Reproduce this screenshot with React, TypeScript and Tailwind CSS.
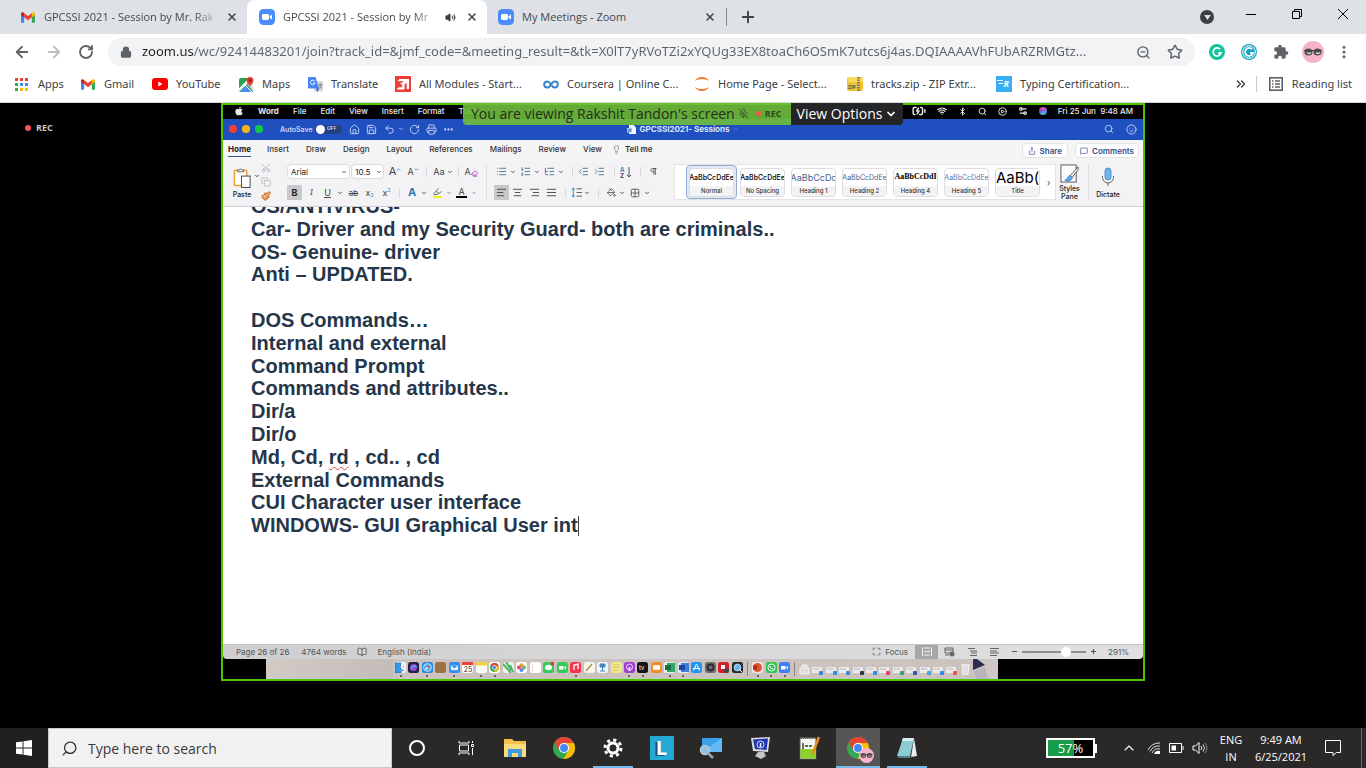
import React from 'react';
import {
  ArrowLeft, ArrowRight, RotateCw, Lock, ZoomOut, Star, MoreVertical, X, Plus, Minus, Volume2,
  ChevronDown, ChevronUp, ChevronsRight, Wifi, Bluetooth, Search, CirclePlay, Smile, House, Save, Undo2,
  Printer, Ellipsis, Lightbulb, MessageSquare, Share, Scissors, Copy, Paintbrush, MicOff, Maximize, BookOpen,
  BatteryCharging, ListTree, AlignLeft, AlignCenter, AlignRight, AlignJustify, List, ListOrdered,
  IndentDecrease, IndentIncrease, Pilcrow, PaintBucket, Grid2x2, Highlighter, Eraser, Settings2,
} from 'lucide-react';
import { FaApple } from 'react-icons/fa';
import { MdExtension } from 'react-icons/md';

type Kids = { children?: React.ReactNode };

/* ---------- brand glyphs ---------- */

const GmailIcon = () => (
  <svg viewBox="0 0 16 12" className="h-[11px] w-[14px] shrink-0">
    <path d="M0 1.5V11a1 1 0 0 0 1 1h2.600V5.200z" fill="#4285f4" />
    <path d="M16 1.5V11a1 1 0 0 1-1 1h-2.600V5.200z" fill="#34a853" />
    <path d="M12.400 1v4.800L16 3V1.600C16 .1 14.300-.5 13.200.3z" fill="#fbbc04" />
    <path d="M3.600 5.800V1L8 4.300 12.400 1v4.800L8 9.100z" fill="#ea4335" />
    <path d="M0 1.600V3l3.600 2.800V1L2.800.3C1.700-.5 0 .1 0 1.600z" fill="#c5221f" />
  </svg>
);

const ZoomIcon = () => (
  <svg viewBox="0 0 16 16" className="size-4 shrink-0">
    <rect width="16" height="16" rx="4.500" fill="#4a8cff" />
    <rect x="3" y="5" width="7" height="6" rx="1.400" fill="#fff" />
    <path d="M10.600 7.200 13 5.400v5.200l-2.400-1.800z" fill="#fff" />
  </svg>
);

const ChromeIcon = ({ className }: { className: string }) => (
  <svg viewBox="0 0 24 24" className={className}>
    <circle cx="12" cy="12" r="12" fill="#34a853" />
    <path d="M12 12 1.600 6A12 12 0 0 1 22.400 6z" fill="#ea4335" />
    <path d="M12 6.500h10.700A12 12 0 0 1 11.500 24l5.300-9.200z" fill="#fbbc04" />
    <path d="M1.600 6 7 15l5-3V6z" fill="#34a853" />
    <path d="M1.600 6h5l5.400.5-5 4-1 3z" fill="#ea4335" />
    <circle cx="12" cy="12" r="5.500" fill="#fff" />
    <circle cx="12" cy="12" r="4.300" fill="#4285f4" />
  </svg>
);

const AppsIcon = () => (
  <svg viewBox="0 0 13 13" className="size-[13px] shrink-0">
    {['#ea4335', '#ea4335', '#ea4335', '#34a853', '#4285f4', '#4285f4', '#34a853', '#fbbc04', '#fbbc04'].map((c, i) => (
      <rect key={i} x={(i % 3) * 5} y={Math.floor(i / 3) * 5} width="3" height="3" fill={c} />
    ))}
  </svg>
);

const YouTubeIcon = () => (
  <svg viewBox="0 0 16 12" className="h-3 w-4 shrink-0">
    <rect width="16" height="12" rx="3" fill="#f00" />
    <path d="M6.300 3.600v4.800L10.400 6z" fill="#fff" />
  </svg>
);

const MapsIcon = () => (
  <svg viewBox="0 0 15 15" className="size-[15px] shrink-0">
    <rect y="1" width="14" height="14" rx="2" fill="#2da04b" />
    <path d="M7 8 14 15H1z" fill="#4b8df8" />
    <path d="M0 13 10 3" stroke="#fff" strokeWidth="2.500" />
    <path d="M6 8l7 7" stroke="#fff" strokeWidth="1" />
    <path d="M8 7l6 7V5z" fill="#d8dade" />
    <path d="M11 10C10.500 7.500 7.500 6 7.500 3.500a3.500 3.500 0 0 1 7 0C14.500 6 11.500 7.500 11 10z" fill="#e33b2e" />
    <circle cx="11" cy="3.500" r="1.200" fill="#8b1a13" />
  </svg>
);

const TranslateIcon = () => (
  <svg viewBox="0 0 15 15" className="size-[15px] shrink-0">
    <rect x="6" y="4" width="9" height="10.500" rx="1" fill="#d5d7da" />
    <path d="M0 1a1 1 0 0 1 1-1h6.500L11 11.500H1a1 1 0 0 1-1-1z" fill="#4285f4" />
    <path d="M8 11.500h3L9.500 15z" fill="#2a56c6" />
    <path d="M6.800 4.300A2.300 2.300 0 1 0 7 6H5" stroke="#fff" strokeWidth="1" fill="none" />
    <path d="M10.500 7.500h4M12.500 6.500v1M13.700 7.500c-.5 2-1.500 3-2.700 4M11.300 8.500c.6 1.500 1.500 2.300 2.700 3" stroke="#6f767d" strokeWidth=".8" fill="none" />
  </svg>
);

const ModulesIcon = () => (
  <svg viewBox="0 0 16 16" className="size-4 shrink-0">
    <rect width="16" height="16" fill="#ee3e36" />
    <path d="M4.500 3H14v10h-2.300V6.800L9.500 8.600v4.900H1.500l2.300-2.300h3.400V8.300H4.500L9 5.300H2.500z" fill="#fff" />
  </svg>
);

const CourseraIcon = () => (
  <svg viewBox="0 0 16 9" className="h-[9px] w-4 shrink-0">
    <path d="M8 4.500C6.500 2 5.500 1.400 4.300 1.400a3.100 3.100 0 0 0 0 6.200C6 7.600 7 6.500 8 4.500s2-3.100 3.700-3.100a3.100 3.100 0 0 1 0 6.200C10.500 7.600 9.500 7 8 4.500z" stroke="#3a86c8" strokeWidth="2" fill="none" />
  </svg>
);

const JupyterIcon = () => (
  <svg viewBox="0 0 16 16" className="size-4 shrink-0">
    <path d="M1 5C3.500-.2 12.500-.2 15 5 11.500 2.300 4.500 2.300 1 5zM1 11C3.500 16.200 12.500 16.200 15 11 11.500 13.700 4.500 13.700 1 11z" fill="#f37726" />
  </svg>
);

const ZipIcon = () => (
  <svg viewBox="0 0 16 14" className="h-[14px] w-4 shrink-0">
    <rect width="16" height="14" rx="2" fill="#efc32f" />
    <rect width="16" height="5" rx="2" fill="#f7d95c" />
    <path d="M11.500 0v14" stroke="#6d7077" strokeWidth="2.500" strokeDasharray="1.500 1" />
    <text x="1" y="12" fontSize="5" fontWeight="700" fill="#3a5a7a" fontFamily="Open Sans">ZIP</text>
  </svg>
);

const TypingIcon = () => (
  <svg viewBox="0 0 16 16" className="size-4 shrink-0">
    <rect width="16" height="16" rx="1" fill="#35aef5" />
    <path d="M1 4.500h6M2.500 7.500H7" stroke="#fff" strokeWidth="1" />
    <text x="7.500" y="11" fontSize="9" fontWeight="700" fontStyle="italic" fill="#fff" fontFamily="Open Sans">R</text>
  </svg>
);

const GlassesFace = ({ className }: { className: string }) => (
  <svg viewBox="0 0 22 22" className={className}>
    <circle cx="11" cy="11" r="11" fill="#f7b3cc" />
    <path d="M2 9.500h18" stroke="#3d3d40" strokeWidth="1" />
    <ellipse cx="6.500" cy="11" rx="4" ry="3.500" fill="#4b4b4f" />
    <ellipse cx="15.500" cy="11" rx="4" ry="3.500" fill="#4b4b4f" />
    <path d="M5 11.500q2 2 4 0M14 11.500q2 2 4 0" stroke="#d9c9cf" strokeWidth="1.300" fill="none" />
  </svg>
);

const Grammarly = ({ outlined }: { outlined?: boolean }) => (
  <svg viewBox="0 0 16 16" className="size-4 shrink-0">
    <circle cx="8" cy="8" r="8" fill={outlined ? '#12a5c4' : '#15c39a'} />
    {outlined && <circle cx="8" cy="8" r="6.300" stroke="#fff" strokeWidth="1" fill="none" />}
    <path d="M11 5.200A4 4 0 1 0 12 8.800H9" stroke="#fff" strokeWidth="1.700" fill="none" />
  </svg>
);

/* ---------- browser chrome ---------- */

const TabTitle = ({ children, className }: Kids & { className: string }) => (
  <span className={`overflow-hidden whitespace-nowrap text-left text-[11px] leading-4 text-[#45494d] ${className}`}>{children}</span>
);

function TabStrip() {
  return (
    <div className="flex h-[34px] shrink-0 items-stretch bg-[#dee1e6]">
      <div className="flex w-[247px] items-center pl-[21px]">
        <GmailIcon />
        <TabTitle className="ml-[9px] w-[176px] [mask-image:linear-gradient(to_right,black_85%,transparent)]">GPCSSI 2021 - Session by Mr. Rak</TabTitle>
        <button aria-label="Close tab" className="ml-[6px]"><X className="size-3 text-[#3c4043]" strokeWidth={3} /></button>
      </div>
      <div className="flex w-[240px] items-center rounded-t-lg bg-white pl-3">
        <ZoomIcon />
        <TabTitle className="ml-2 w-[154px] [mask-image:linear-gradient(to_right,black_85%,transparent)]">GPCSSI 2021 - Session by Mr</TabTitle>
        <Volume2 className="ml-2 size-[11px] text-[#3c4043]" fill="#3c4043" />
        <button aria-label="Close tab" className="ml-[10px]"><X className="size-3 text-[#3c4043]" strokeWidth={3} /></button>
      </div>
      <div className="flex w-[239px] items-center pl-[11px]">
        <ZoomIcon />
        <TabTitle className="ml-2 w-[180px]">My Meetings - Zoom</TabTitle>
        <button aria-label="Close tab" className="ml-[2px]"><X className="size-3 text-[#3c4043]" strokeWidth={3} /></button>
      </div>
      <div className="my-2 w-px bg-[#8a8d91]" />
      <button aria-label="New tab" className="ml-3"><Plus className="size-[18px] text-[#3c4043]" strokeWidth={2.5} /></button>
      <div className="ml-auto flex items-center pr-[18px]">
        <span className="mr-8 flex size-[14px] items-center justify-center rounded-full bg-[#3c4043]">
          <svg viewBox="0 0 8 6" className="h-[5px] w-[7px]"><path d="M0 0h8L4 6z" fill="#dee1e6" /></svg>
        </span>
        <button aria-label="Minimize" className="mb-[6px]"><svg viewBox="0 0 10 10" className="size-[10px]"><path d="M0 5.500h10" stroke="#000" /></svg></button>
        <button aria-label="Restore" className="mb-[6px] ml-9"><svg viewBox="0 0 10 10" className="size-[10px]"><path d="M.5 2.500h7v7h-7zM2.500 2.500v-2h7v7h-2" stroke="#000" fill="none" /></svg></button>
        <button aria-label="Close" className="mb-[6px] ml-9"><svg viewBox="0 0 10 10" className="size-[10px]"><path d="M0 0l10 10M10 0 0 10" stroke="#000" /></svg></button>
      </div>
    </div>
  );
}

function AddressBar() {
  return (
    <div className="flex h-9 shrink-0 items-center bg-white pl-[13px] pr-[14px] text-[#5f6368]">
      <button aria-label="Back"><ArrowLeft className="size-[18px]" strokeWidth={2.4} /></button>
      <button aria-label="Forward" className="ml-[14px]"><ArrowRight className="size-[18px] text-[#babcbe]" strokeWidth={2.4} /></button>
      <button aria-label="Reload" className="ml-[15px]"><RotateCw className="size-4" strokeWidth={2.8} /></button>
      <div className="ml-[14px] flex h-7 flex-1 items-center rounded-full bg-[#f1f3f4] pl-3 pr-3">
        <Lock className="size-3 text-[#5f6368]" fill="#5f6368" strokeWidth={2.5} />
        <input
          aria-label="Address"
          readOnly
          className="ml-[10px] min-w-0 flex-1 bg-[linear-gradient(to_right,#202124_52px,#5f6368_52px)] bg-clip-text font-['Noto_Sans','Open_Sans',sans-serif] text-[13px] text-transparent outline-none"
          value="zoom.us/wc/92414483201/join?track_id=&jmf_code=&meeting_result=&tk=X0lT7yRVoTZi2xYQUg33EX8toaCh6OSmK7utcs6j4as.DQIAAAAVhFUbARZRMGtz..."
        />
        <button aria-label="Zoom" className="ml-2"><ZoomOut className="size-[15px]" strokeWidth={2.2} /></button>
        <button aria-label="Bookmark" className="ml-4"><Star className="size-4" strokeWidth={2.2} /></button>
      </div>
      <div className="ml-[14px] flex items-center gap-4">
        <Grammarly />
        <Grammarly outlined />
        <MdExtension className="size-4" />
      </div>
      <GlassesFace className="ml-[13px] size-[22px]" />
      <button aria-label="Menu" className="ml-3"><MoreVertical className="size-4" strokeWidth={2.5} /></button>
    </div>
  );
}

const bookmarks: { icon: React.ReactNode; label: string; cell: string; gap: string }[] = [
  { icon: <AppsIcon />, label: 'Apps', cell: 'w-[66px]', gap: 'gap-[10px]' },
  { icon: <GmailIcon />, label: 'Gmail', cell: 'w-[71px]', gap: 'gap-[9px]' },
  { icon: <YouTubeIcon />, label: 'YouTube', cell: 'w-[87px]', gap: 'gap-2' },
  { icon: <MapsIcon />, label: 'Maps', cell: 'w-[69px]', gap: 'gap-2' },
  { icon: <TranslateIcon />, label: 'Translate', cell: 'w-[87px]', gap: 'gap-2' },
  { icon: <ModulesIcon />, label: 'All Modules - Start...', cell: 'w-[148px]', gap: 'gap-2' },
  { icon: <CourseraIcon />, label: 'Coursera | Online C...', cell: 'w-[151px]', gap: 'gap-2' },
  { icon: <JupyterIcon />, label: 'Home Page - Select...', cell: 'w-[153px]', gap: 'gap-2' },
  { icon: <ZipIcon />, label: 'tracks.zip - ZIP Extr...', cell: 'w-[149px]', gap: 'gap-2' },
  { icon: <TypingIcon />, label: 'Typing Certification...', cell: 'w-[150px]', gap: 'gap-2' },
];

function BookmarkBar() {
  return (
    <div className="flex h-[33px] shrink-0 items-center border-b border-[#d5d7da] bg-white pb-1 pl-[15px] pr-[14px] font-['Noto_Sans','Open_Sans',sans-serif] text-[11px] text-[#3c4043]">
      {bookmarks.map((b) => (
        <a key={b.label} href="#" className={`flex shrink-0 items-center whitespace-nowrap ${b.cell} ${b.gap}`}>{b.icon}{b.label}</a>
      ))}
      <ChevronsRight className="ml-auto size-[14px]" strokeWidth={2.5} />
      <div className="ml-2 h-4 w-px bg-[#c8cacd]" />
      <button className="ml-3 flex items-center gap-[9px] whitespace-nowrap">
        <svg viewBox="0 0 14 14" className="size-[14px]">
          <rect x=".8" y=".8" width="12.400" height="12.400" stroke="#5f6368" strokeWidth="1.600" fill="none" />
          <path d="M3 4h1.500M3 7h1.500M3 10h1.500M6 4h5M6 7h5M6 10h5" stroke="#5f6368" strokeWidth="1.300" />
        </svg>
        Reading list
      </button>
    </div>
  );
}

/* ---------- shared Mac screen ---------- */

function MacMenuBar() {
  return (
    <div className="flex h-[14px] items-center bg-black pb-[2px] pl-[11px] pr-[10px] text-[8px] font-medium leading-none text-[#e8e8e8]">
      <FaApple className="size-[10px]" />
      <span className="ml-[14px] font-bold">Word</span>
      <div className="ml-[14px] flex gap-[14px]">
        {['File', 'Edit', 'View', 'Insert', 'Format', 'Tools'].map((m) => <span key={m}>{m}</span>)}
      </div>
      <div className="ml-auto flex items-center gap-[11px]">
        <BatteryCharging className="size-[14px]" strokeWidth={2.5} />
        <Wifi className="size-[10px]" strokeWidth={3} />
        <Bluetooth className="size-[9px]" strokeWidth={2.5} />
        <Search className="size-[9px]" strokeWidth={2.5} />
        <CirclePlay className="size-[9px]" strokeWidth={2.5} />
        <Settings2 className="size-[10px]" strokeWidth={3} />
        <span className="size-2 rounded-full bg-[conic-gradient(#e6519c,#5b7cf0,#38c7d8,#8e44c9,#e6519c)]" />
        <span>Fri 25 Jun&nbsp; 9:48 AM</span>
      </div>
    </div>
  );
}

function WordTitleBar() {
  return (
    <div className="grid h-[21px] grid-cols-[1fr_auto_1fr] items-center bg-[#204fc0] px-[6px] pb-px text-[#c9d6f5]">
      <div className="flex items-center">
        <div className="flex gap-[5px]">
          <span className="size-2 rounded-full bg-[#f0403b]" />
          <span className="size-2 rounded-full bg-[#fcb716]" />
          <span className="size-2 rounded-full bg-[#12cb45]" />
        </div>
        <span className="ml-[17px] text-[7px] font-semibold leading-none">AutoSave</span>
        <button aria-label="AutoSave off" className="ml-[3px] flex h-[9px] w-[26px] items-center rounded-full bg-[#24407f] text-[5px] font-semibold">
          <span className="mr-[2px] size-[9px] rounded-full bg-white" />OFF
        </button>
        <House className="ml-[7px] size-[11px]" />
        <Save className="ml-[6px] size-[11px]" />
        <Undo2 className="ml-[7px] size-[11px]" />
        <ChevronDown className="ml-[3px] size-[6px]" strokeWidth={3} />
        <RotateCw className="ml-[5px] size-[11px]" />
        <Printer className="ml-[6px] size-[11px]" />
        <Ellipsis className="ml-[6px] size-[11px]" strokeWidth={3} />
      </div>
      <div className="flex items-center gap-1 text-[8px] font-bold leading-none text-[#dbe5fb]">
        <svg viewBox="0 0 9 9" className="size-[9px]"><path d="M2 0h4.500L9 2.500V9H2z" fill="#f1f5ff" /><rect y="3" width="5" height="4.500" fill="#a9c2f3" /><path d="M1 4l.8 2.500L2.500 4.500 3.200 6.500 4 4" stroke="#204fc0" strokeWidth=".5" fill="none" /></svg>
        GPCSSI2021- Sessions
        <ChevronDown className="size-[6px] text-[#6f90dd]" strokeWidth={2} />
      </div>
      <div className="flex items-center justify-end gap-3">
        <Search className="size-[10px]" />
        <Smile className="size-[11px]" />
      </div>
    </div>
  );
}

function RibbonTabs() {
  return (
    <div className="flex h-[21px] items-center bg-[#f6f5f6] pl-[5px] pr-1 text-[8px] font-medium leading-none text-[#333]">
      <div className="flex items-center gap-[17px] pb-[3px]">
        <button className="-mr-px border-b border-[#2b579a] pb-[3px] pt-1 font-bold text-[#222]">Home</button>
        {['Insert', 'Draw', 'Design', 'Layout', 'References', 'Mailings', 'Review', 'View'].map((t) => <button key={t}>{t}</button>)}
      </div>
      <div className="ml-[10px] flex items-center gap-1 pb-[3px]">
        <Lightbulb className="size-[9px] text-[#777]" />
        <button className="font-semibold">Tell me</button>
      </div>
      <button className="ml-auto flex h-[15px] items-center gap-1 rounded-sm border border-[#e3e2e4] bg-white px-[5px] font-semibold text-[#33508c]"><Share className="size-2" />Share</button>
      <button className="ml-[7px] flex h-[15px] items-center gap-1 rounded-sm border border-[#e3e2e4] bg-white px-1 font-semibold text-[#33508c]"><MessageSquare className="size-2" />Comments</button>
    </div>
  );
}

const Cell = ({ w, children }: Kids & { w: string }) => <span className={`flex shrink-0 items-center justify-center ${w}`}>{children}</span>;
const Chev = ({ w = 'w-3' }: { w?: string }) => <Cell w={w}><ChevronDown className="size-[6px] text-[#444]" strokeWidth={3.5} /></Cell>;
const Sep = ({ w = 'w-2' }: { w?: string }) => <Cell w={w}><span className="h-[10px] w-px bg-[#d8d7d9]" /></Cell>;

const styleCards: { sample: string; name: string; look: string }[] = [
  { sample: 'AaBbCcDdEe', name: 'Normal', look: 'text-[7px] text-black font-medium' },
  { sample: 'AaBbCcDdEe', name: 'No Spacing', look: 'text-[7px] text-black font-medium' },
  { sample: 'AaBbCcDc', name: 'Heading 1', look: 'text-[9px] text-[#4a6190]' },
  { sample: 'AaBbCcDdEe', name: 'Heading 2', look: 'text-[7px] text-[#4a6190]' },
  { sample: 'AaBbCcDdI', name: 'Heading 4', look: "text-[8px] font-bold text-black font-['Liberation_Serif',serif]" },
  { sample: 'AaBbCcDdEe', name: 'Heading 5', look: 'text-[7px] text-[#5a74a8]' },
  { sample: 'AaBb(', name: 'Title', look: 'text-[15px] text-black' },
];

function Ribbon() {
  return (
    <div className="flex h-[46px] items-center border-b border-[#cfced0] bg-[#f3f2f4] pb-[3px] text-[9px] leading-none text-[#444]">
      <div className="flex w-[54px] shrink-0 items-center pl-[7px]">
        <button className="flex w-6 flex-col items-center gap-[3px] text-[7px] font-medium text-[#222]">
          <svg viewBox="0 0 20 22" className="h-[21px] w-[19px]">
            <rect x="1.500" y="3.500" width="13" height="16" rx="1" stroke="#e9a23c" strokeWidth="1.600" fill="#fff" />
            <path d="M5 5V3h1.500a1.700 1.700 0 0 1 3 0H11v2z" stroke="#666" fill="#eee" />
            <rect x="9" y="9.500" width="9" height="12" stroke="#444" fill="#fff" />
          </svg>
          Paste
        </button>
        <ChevronDown className="mb-3 size-[6px] shrink-0" strokeWidth={3.5} />
        <div className="ml-px flex flex-col gap-1">
          <Scissors className="size-[10px] -rotate-90 text-[#aab3bd]" />
          <Copy className="size-[10px] text-[#b3b3b5]" />
          <Paintbrush className="size-[10px] text-[#d9782b]" strokeWidth={3} />
        </div>
      </div>

      <div className="ml-[10px] flex w-[194px] shrink-0 flex-col gap-[6px]">
        <div className="flex h-[15px] items-center">
          <label className="relative flex h-[15px] w-16 items-center rounded-sm border border-[#dcdbdd] bg-white">
            <select aria-label="Font" className="w-full appearance-none pl-[3px] text-[8px] text-[#222] outline-none"><option>Arial</option></select>
            <ChevronDown className="absolute right-[2px] size-[6px]" strokeWidth={3.5} />
          </label>
          <label className="relative ml-px flex h-[15px] w-[33px] items-center rounded-sm border border-[#dcdbdd] bg-white">
            <select aria-label="Font size" className="w-full appearance-none pl-[3px] text-[8px] text-[#222] outline-none"><option>10.5</option></select>
            <ChevronDown className="absolute right-[1px] size-[6px]" strokeWidth={3.5} />
          </label>
          <Cell w="w-[22px]"><span className="text-[11px]">A</span><ChevronUp className="mb-1 size-[5px] text-[#2b8ac6]" strokeWidth={4} /></Cell>
          <Cell w="w-[14px]"><span>A</span><ChevronDown className="mb-1 size-[5px] text-[#2b8ac6]" strokeWidth={4} /></Cell>
          <Sep w="w-[13px]" />
          <Cell w="w-[12px]">Aa</Cell>
          <Chev w="w-[10px]" />
          <Sep w="w-[6px]" />
          <Cell w="w-5">A<Eraser className="mt-1 size-[7px] text-[#b146c2]" strokeWidth={3} /></Cell>
        </div>
        <div className="flex h-[15px] items-center">
          <button className="h-[15px] w-[15px] shrink-0 bg-[#c9c8ca] font-bold text-[#222]">B</button>
          <Cell w="w-[19px]"><i className="font-serif">I</i></Cell>
          <Cell w="w-[13px]"><u>U</u></Cell>
          <Chev />
          <Cell w="w-[15px]"><s className="text-[8px]">ab</s></Cell>
          <Cell w="w-[17px]">x<span className="mt-[5px] text-[5px] text-[#2b8ac6]">2</span></Cell>
          <Cell w="w-[17px]">x<span className="mb-[5px] text-[5px] text-[#2b8ac6]">2</span></Cell>
          <Sep />
          <Cell w="w-[18px]"><b className="text-[11px] text-[#2a7ab0]">A</b></Cell>
          <Chev w="w-[6px]" />
          <Cell w="w-5"><span className="border-b-2 border-[#f5ee1c]"><Highlighter className="size-[9px]" /></span></Cell>
          <Chev w="w-1" />
          <Cell w="w-[21px]"><span className="border-b-2 border-black px-[2px]">A</span></Cell>
          <Chev w="w-1" />
        </div>
      </div>

      <div className="ml-[5px] flex w-[172px] shrink-0 flex-col gap-[6px] border-l border-[#e1e0e2] pl-2">
        <div className="flex h-[15px] items-center">
          <Cell w="w-3"><List className="size-[11px] text-[#4b7896]" /></Cell><Chev />
          <Cell w="w-3"><ListOrdered className="size-[11px] text-[#4b7896]" /></Cell><Chev />
          <Cell w="w-3"><ListTree className="size-[11px] text-[#4b7896]" /></Cell><Chev />
          <Sep w="w-[10px]" />
          <Cell w="w-3"><IndentDecrease className="size-[11px] text-[#4b7896]" /></Cell>
          <Cell w="w-5"><IndentIncrease className="size-[11px] text-[#4b7896]" /></Cell>
          <Sep w="w-[10px]" />
          <Cell w="w-[14px]">
            <svg viewBox="0 0 12 12" className="size-3"><text x="0" y="5.500" fontSize="6" fontWeight="700" fill="#2b8ac6" fontFamily="Inter">A</text><text x="0" y="11.500" fontSize="6" fontWeight="700" fill="#444" fontFamily="Inter">Z</text><path d="M9 1v10M7 9l2 2 2-2" stroke="#555" fill="none" /></svg>
          </Cell>
          <Sep w="w-[14px]" />
          <Cell w="w-3"><Pilcrow className="size-[9px]" /></Cell>
        </div>
        <div className="flex h-[15px] items-center">
          <span className="-ml-px flex h-[15px] w-[15px] shrink-0 items-center justify-center bg-[#c9c8ca]"><AlignLeft className="size-[11px]" /></span>
          <Cell w="w-[17px]"><AlignCenter className="size-[11px]" /></Cell>
          <Cell w="w-[17px]"><AlignRight className="size-[11px]" /></Cell>
          <Cell w="w-[17px]"><AlignJustify className="size-[11px]" /></Cell>
          <Sep w="w-[10px]" />
          <Cell w="w-3">
            <svg viewBox="0 0 12 12" className="size-[11px]"><path d="M2.500 1v10M1 3l1.500-2L4 3M1 9l1.500 2L4 9" stroke="#2b8ac6" fill="none" /><path d="M6 2h6M6 6h6M6 10h6" stroke="#555" /></svg>
          </Cell>
          <Chev w="w-[10px]" />
          <Sep w="w-3" />
          <Cell w="w-[14px]"><PaintBucket className="size-[9px]" /></Cell><Chev w="w-[8px]" />
          <Cell w="w-[18px]"><Grid2x2 className="size-[10px]" strokeDasharray="2 2" /></Cell><Chev w="w-[6px]" />
        </div>
      </div>

      <div className="ml-4 flex h-9 w-[382px] shrink-0 items-center border border-[#e3e2e4] bg-white pl-[11px]">
        {styleCards.map((s, i) => (
          <button key={s.name} className={`flex h-[34px] w-[51px] shrink-0 items-center justify-center ${i === 0 ? 'rounded-sm border border-[#8fabd6] bg-[#dfe9f7]' : ''}`}>
            <span className="flex h-[29px] w-[45px] flex-col overflow-hidden rounded-sm border border-[#dddcde] bg-white">
              <span className={`flex flex-1 items-center justify-center whitespace-nowrap leading-none ${s.look}`}>{s.sample}</span>
              <span className="flex h-[10px] items-center justify-center whitespace-nowrap bg-[#f3f2f4] text-[6px] font-medium text-[#333]">{s.name}</span>
            </span>
          </button>
        ))}
        <span className="ml-1 text-[9px]">›</span>
      </div>

      <button className="flex w-[27px] shrink-0 flex-col items-center gap-[2px] text-[7px] font-medium leading-[8px] text-[#222]">
        <svg viewBox="0 0 20 20" className="size-[19px]">
          <rect x="1" y="1" width="16" height="18" stroke="#555" fill="#fbfbfb" />
          <path d="M19 3 11 12l2 2 6-8z" stroke="#555" fill="#fff" /><path d="M11 12c-3 0-3 4-6 5 3 2 8 1 8-3z" fill="#5aa9e6" stroke="#2c6fa8" strokeWidth=".6" />
        </svg>
        <span>Styles<br />Pane</span>
      </button>
      <span className="ml-[5px] h-9 w-px shrink-0 bg-[#dddcde]" />
      <button className="ml-[7px] flex w-6 shrink-0 flex-col items-center gap-1 text-[7px] font-medium text-[#222]">
        <svg viewBox="0 0 14 20" className="h-5 w-[14px]">
          <rect x="4" y="1" width="6" height="12" rx="3" fill="#6db5ee" stroke="#3c84c4" strokeWidth=".8" />
          <path d="M1.500 9v1.500a5.500 5.500 0 0 0 11 0V9M7 16v3" stroke="#666" fill="none" />
        </svg>
        Dictate
      </button>
    </div>
  );
}

const documentLines: React.ReactNode[] = [
  'OS/ANTIVIRUS-',
  'Car- Driver and my Security Guard- both are criminals..',
  'OS- Genuine- driver',
  'Anti – UPDATED.',
  '',
  'DOS Commands…',
  'Internal and external',
  'Command Prompt',
  'Commands and attributes..',
  'Dir/a',
  'Dir/o',
  <>Md, Cd, <span className="underline decoration-[#e0413c] decoration-wavy decoration-1 underline-offset-2">rd</span> , cd.. , cd</>,
  'External Commands',
  'CUI Character user interface',
  <>WINDOWS- GUI Graphical User int<span className="inline-block h-[20px] w-px bg-[#444] align-text-bottom" /></>,
];

function DocumentPage() {
  return (
    <div className="h-[437px] overflow-hidden bg-white pl-7">
      <div className="-mt-3 grid h-[342px] grid-rows-[repeat(15,1fr)] font-['Liberation_Sans',Arial,sans-serif] text-[20px] font-bold leading-[22px] text-[#26364a]">
        {documentLines.map((line, i) => <p key={i} className="whitespace-nowrap">{line}</p>)}
      </div>
    </div>
  );
}

function StatusBar() {
  return (
    <div className="flex h-[15px] items-center rounded-b-[4px] border-t border-[#c3c2c4] bg-gradient-to-r from-[#cfced0] to-[#e0dfe1] pb-px pl-[13px] pr-[14px] text-[8px] leading-none text-[#555]">
      <span>Page 26 of 26</span>
      <span className="ml-3">4764 words</span>
      <BookOpen className="ml-[10px] size-[10px]" />
      <span className="ml-[11px]">English (India)</span>
      <Maximize className="ml-auto size-[9px]" />
      <span className="ml-1">Focus</span>
      <span className="ml-[7px] flex h-[14px] w-[23px] items-center justify-center bg-[#a7a6a8]">
        <svg viewBox="0 0 10 9" className="h-[9px] w-[10px]"><path d="M.5 0v9M9.500 0v9M2 1h6M2 4.500h6M2 8h6" stroke="#eee" /></svg>
      </span>
      <svg viewBox="0 0 11 10" className="ml-[6px] h-[10px] w-[11px]"><path d="M1 1h8v5H1zM1 3h8M1 8h4" stroke="#666" fill="none" /><circle cx="8" cy="7" r="2.500" fill="#666" /></svg>
      <svg viewBox="0 0 10 8" className="ml-[13px] h-2 w-[10px]"><path d="M0 .5h7M2 3h7M3 5h6M2 7.500h7" stroke="#666" /></svg>
      <svg viewBox="0 0 9 8" className="ml-3 h-2 w-[9px]"><path d="M0 .5h9M0 3h7M0 5h9M0 7.500h7" stroke="#666" /></svg>
      <Minus className="ml-3 size-[7px]" strokeWidth={4} />
      <input type="range" aria-label="Page zoom" defaultValue={73} className="ml-1 h-[2px] w-16 appearance-none bg-[#8f8e90] [&::-webkit-slider-thumb]:size-[10px] [&::-webkit-slider-thumb]:appearance-none [&::-webkit-slider-thumb]:rounded-full [&::-webkit-slider-thumb]:bg-white" />
      <Plus className="ml-1 size-[7px]" strokeWidth={4} />
      <span className="ml-[11px]">291%</span>
    </div>
  );
}

type DockApp = { bg: string; art?: React.ReactNode; open?: boolean };
const W = '#fff';
const dockApps: DockApp[] = [
  { bg: '#e9f3fb', art: <path d="M0 1h6l-1 5h1v5H0zM2 4v1M8.500 4v1M2 8q3.500 2 7 0" fill="#2b9df4" stroke="#124a80" strokeWidth=".5" />, open: true },
  { bg: '#25203f', art: <><circle cx="5.500" cy="5.500" r="3.500" fill="#8d4bd6" /><path d="M3 7q2-5 6-2" stroke="#4fd0e8" fill="none" /></> },
  { bg: '#2f86e0', art: <><circle cx="5.500" cy="5.500" r="4" fill="#4fb0f5" stroke={W} strokeWidth=".6" /><path d="M8 3 6.300 6.300 4.700 4.700z" fill="#e8413a" /><path d="M3 8l1.700-3.300 1.600 1.600z" fill={W} /></>, open: true },
  { bg: '#9c7441' },
  { bg: '#2e8ff0', art: <path d="M2 3.500h7v4.500H2zM2 3.500 5.500 6.500 9 3.500" fill={W} stroke="#9cc9f7" strokeWidth=".5" />, open: true },
  { bg: '#fff', art: <><path d="M0 0h11v3H0z" fill="#e8413a" /><text x="1.800" y="9.500" fontSize="7" fill="#333" fontFamily="Inter">25</text></> },
  { bg: '#fdfcf5', art: <path d="M0 0h11v3.500H0z" fill="#f7cf45" />, open: true },
  { bg: '#fff', art: <><circle cx="5.500" cy="5.500" r="4.500" fill="#34a853" /><path d="M5.500 5.500 1.500 3.500A4.500 4.500 0 0 1 9.500 3.500z" fill="#ea4335" /><path d="M5.500 5.500 9.500 3.500A4.500 4.500 0 0 1 5.500 10z" fill="#fbbc04" /><circle cx="5.500" cy="5.500" r="2" fill="#4285f4" stroke={W} strokeWidth=".7" /></>, open: true },
  { bg: '#eef3e6', art: <path d="M0 2l8 9M3 0l5 8M7 3l3 7" stroke="#4db665" strokeWidth="2" /> },
  { bg: '#fff', art: <><circle cx="5.500" cy="3.200" r="2" fill="#f39b2d" /><circle cx="8" cy="5.500" r="2" fill="#6bbf4e" /><circle cx="5.500" cy="8" r="2" fill="#4f8ff0" /><circle cx="3" cy="5.500" r="2" fill="#e5476e" /></> },
  { bg: '#fff', art: <path d="M2 3h1M2 5.500h1M2 8h1" stroke="#e88" strokeWidth="1.200" /> },
  { bg: '#34cc57', art: <><ellipse cx="5.500" cy="5.500" rx="3.500" ry="2.800" fill={W} /><circle cx="9.500" cy="1.500" r="2" fill="#f0392f" /></> },
  { bg: '#34cc57', art: <path d="M2 4h4.500v3.500H2zM7 5.500 9 4v3.500z" fill={W} /> },
  { bg: '#f7344e', art: <path d="M4 8V3l4-1v5" stroke={W} strokeWidth="1.300" fill="none" />, open: true },
  { bg: '#f7f5f0', art: <path d="M2 9 8 2" stroke="#b08a3c" strokeWidth="1.300" /> },
  { bg: '#f4f6f8', art: <path d="M3 2h5v3H3zM5.500 5v4M3 9h5" stroke="#3f88c5" strokeWidth="1" fill="#3f88c5" /> },
  { bg: '#f4e989', art: <path d="M2 3h7M2 5.500h7M2 8h5" stroke="#c8bb57" strokeWidth=".8" /> },
  { bg: '#a13fd0', art: <><circle cx="5.500" cy="5" r="3" stroke={W} fill="none" strokeWidth=".8" /><path d="M5.500 5v4" stroke={W} strokeWidth="1.500" /></>, open: true },
  { bg: '#151515', art: <text x="2" y="7.500" fontSize="6" fill="#fff" fontFamily="Inter">tv</text>, open: true },
  { bg: '#f48c26', art: <path d="M2 3.500q2-1 3.500 0 1.500-1 3.500 0v4.500q-2-1-3.500 0-1.500-1-3.500 0z" fill={W} /> },
  { bg: '#e8f2ec', art: <><path d="M3 1h8v9H3z" fill="#2fa566" /><path d="M1 3h6v5H1z" fill="#1a6b3f" /></>, open: true },
  { bg: '#e6edf8', art: <><path d="M3 1h8v9H3z" fill="#3d7fd9" /><path d="M1 3h6v5H1z" fill="#1c479c" /></>, open: true },
  { bg: '#2195f2', art: <path d="M5.500 2 2.500 8.500M5.500 2l3 6.500M2 6.500h7" stroke={W} strokeWidth="1" fill="none" /> },
  { bg: '#6e6e70', art: <circle cx="5.500" cy="5.500" r="3" stroke="#2d2d2f" strokeWidth="2" fill="none" /> },
  { bg: '#d42027', art: <><path d="M3 3h4v4H3z" fill={W} /><circle cx="8.500" cy="8.500" r="2.500" fill="#444" /></> },
  { bg: '#20262c', art: <><circle cx="5.500" cy="5.500" r="3.500" fill="#6fb6e8" stroke={W} strokeWidth=".6" /><path d="M7 7l3 3" stroke={W} /></> },
];
const dockRight: DockApp[] = [
  { bg: '#f3e6e0', art: <><circle cx="5.500" cy="5.500" r="4.500" fill="#e0553a" /><path d="M1 3.500h4v4H1z" fill="#b02a12" /></>, open: true },
  { bg: '#2fc351', art: <><circle cx="5.500" cy="5.500" r="3.500" stroke={W} fill="none" /><path d="M4 4q0 3 3 3" stroke={W} fill="none" /></>, open: true },
  { bg: '#3f7ff2', art: <path d="M2 4h4.500v3.500H2zM7 5.500 9 4v3.500z" fill={W} />, open: true },
];
const dockWindows = ['#c9c9cb', '#2b8ce6', '#2b8ce6', '#2b8ce6', '#333', '#2b8ce6', '#e83c6e', '#38a169', '#2459b8', '#4b9fd8', '#2b8ce6', '#e05a3c', '#d9d9db'];

const DockTile = ({ app }: { app: DockApp }) => (
  <span className="flex w-[11px] flex-col items-center gap-[2px]">
    <svg viewBox="0 0 11 11" className="size-[11px]"><rect width="11" height="11" rx="2.500" fill={app.bg} />{app.art}</svg>
    <span className={`size-[2px] rounded-full ${app.open ? 'bg-[#444]' : ''}`} />
  </span>
);

function Dock() {
  return (
    <div className="flex h-5 bg-black pl-[43px]">
      <div className="flex w-[732px] items-stretch bg-gradient-to-r from-[#d2cac5] via-[#aaa2a0] to-[#cfc8c4] pl-[127px]">
        <div className="flex w-[580px] items-center rounded-t bg-[#cdc3be] pl-[2px]">
          <div className="flex w-[348px] shrink-0 justify-between">{dockApps.map((a, i) => <DockTile key={i} app={a} />)}</div>
          <span className="mx-1 h-[14px] w-px bg-[#8b8380]" />
          <div className="flex w-[38px] shrink-0 justify-between">{dockRight.map((a, i) => <DockTile key={i} app={a} />)}</div>
          <span className="mx-1 h-[14px] w-px bg-[#8b8380]" />
          <div className="flex w-[172px] shrink-0 justify-between">
            {dockWindows.map((c, i) => (
              <svg key={i} viewBox="0 0 11 11" className="size-[11px]">
                {i === 0 ? <path d="M1 4h9v6H1zM3 4V1h5v3" fill="#dedee0" stroke="#f2f2f2" /> : i === 12 ? <path d="M2 0h7L8 11H3z" fill="#e3e0e3" stroke="#f2f0f2" /> : <><rect y="3" width="10" height="6" fill="#ece9ea" /><path d="M1 5h6" stroke="#b9b5b8" /><rect x="7" y="7" width="4" height="4" rx="1" fill={c} /></>}
              </svg>
            ))}
          </div>
        </div>
        <svg viewBox="0 0 24 20" className="h-5 w-6"><path d="M0 0h4l8 6-12 5z" fill="#2a2c55" /><path d="M1 12l11-4 3 12H3z" fill="#b9b4bb" /></svg>
      </div>
    </div>
  );
}

function ShareBanner() {
  return (
    <div className="absolute left-[240px] top-[-2px] flex h-[22px] items-stretch overflow-hidden rounded-b leading-none text-[14px]">
      <div className="flex w-[328px] items-center bg-[#6fbe3b]/90 pb-px pl-2 text-[#262b24]">
        <span className="whitespace-nowrap">You are viewing Rakshit Tandon's screen</span>
        <MicOff className="ml-[3px] size-[11px] shrink-0 text-[#37502a]" />
        <span className="ml-[7px] size-[5px] shrink-0 rounded-full bg-[#f4564d]" />
        <span className="ml-1 text-[9px] font-bold text-[#2f4b1f]">REC</span>
      </div>
      <button className="flex w-28 items-center justify-center gap-[3px] whitespace-nowrap bg-[#242526] pb-px text-white">
        View Options <ChevronDown className="size-3" strokeWidth={3.5} />
      </button>
    </div>
  );
}

function Meeting() {
  return (
    <main className="grid flex-1 grid-cols-[1fr_minmax(0,924px)_1fr] items-start overflow-hidden bg-black">
      <div className="flex items-center gap-[5px] pl-[25px] pt-[19px] text-[9px] font-bold leading-[11px] text-[#c9c9c9]">
        <span className="size-[6px] rounded-full bg-[#fb5151]" />REC
      </div>
      <section className="relative border-2 border-[#4bc800] font-['Inter',sans-serif]">
        <MacMenuBar />
        <WordTitleBar />
        <RibbonTabs />
        <Ribbon />
        <DocumentPage />
        <div className="bg-black"><StatusBar /></div>
        <Dock />
        <div className="font-['Open_Sans','Noto_Sans',sans-serif]"><ShareBanner /></div>
      </section>
    </main>
  );
}

/* ---------- Windows taskbar ---------- */

const TaskButton = ({ label, state = '', children }: Kids & { label: string; state?: string }) => (
  <button aria-label={label} className="flex w-[49px] shrink-0 items-stretch justify-center">
    <span className={`flex items-center justify-center border-b-2 pt-[2px] ${state || 'w-10 border-transparent'}`}>{children}</span>
  </button>
);

function Taskbar() {
  return (
    <footer className="flex h-10 shrink-0 items-stretch bg-[#2b2828] text-[11px] text-white">
      <button aria-label="Start" className="flex w-12 shrink-0 items-center justify-center bg-[#202020]">
        <svg viewBox="0 0 16 16" className="size-4"><path d="M0 2.300 6.600 1.400v6.200H0zM7.500 1.200 16 0v7.600H7.500zM0 8.500h6.600v6.100L0 13.700zM7.500 8.500H16V16l-8.500-1.200z" fill="#fff" /></svg>
      </button>
      <label className="flex w-[344px] items-center border border-[#c8c8c8] bg-[#f1f1f1] pl-3 text-[#2b2b2b]">
        <Search className="size-[17px] -scale-x-100" strokeWidth={1.7} />
        <input aria-label="Search" placeholder="Type here to search" className="ml-[10px] min-w-0 flex-1 text-[14px] outline-none placeholder:text-[#3a3a3a]" />
      </label>
      <TaskButton label="Cortana"><span className="size-4 rounded-full border-2 border-white" /></TaskButton>
      <TaskButton label="Task view">
        <svg viewBox="0 0 16 16" className="size-4"><path d="M1 1v2h10V1M1 15v-2h10v2M1.500 5h9v6h-9zM14.500 1v2M14.500 8v7M13.500 4.500h2v2h-2z" stroke="#fff" fill="none" /></svg>
      </TaskButton>
      <TaskButton label="File Explorer">
        <svg viewBox="0 0 22 18" className="h-[18px] w-[22px]"><path d="M0 0h8l2 2h12v16H0z" fill="#f3c14b" /><path d="M0 5h22v13H0z" fill="#fbdc7c" /><path d="M4 18v-8h14v8h-4v-4H8v4z" fill="#3f9be0" /></svg>
      </TaskButton>
      <TaskButton label="Chrome"><ChromeIcon className="size-[22px]" /></TaskButton>
      <TaskButton label="Settings" state="w-10 border-[#76b9ed]">
        <svg viewBox="0 0 20 20" className="size-5"><circle cx="10" cy="10" r="5" stroke="#fff" strokeWidth="3" fill="none" /><circle cx="10" cy="10" r="8" stroke="#fff" strokeWidth="3" fill="none" strokeDasharray="3.140 3.140" /></svg>
      </TaskButton>
      <TaskButton label="Lexicon">
        <span className="flex size-6 items-center justify-center bg-[#22a9d6] text-[20px] font-bold leading-none text-white [text-shadow:-2px_1px_0_#12527d]">L</span>
      </TaskButton>
      <TaskButton label="Remote viewer">
        <svg viewBox="0 0 24 24" className="size-6"><path d="M3 2h20v14H3z" fill="#3aa0ea" /><path d="M3 16 23 2v14z" fill="#63b9f5" /><circle cx="6" cy="14" r="4.500" fill="#8fc3e8" stroke="#b7c9d6" strokeWidth="1.500" /><path d="M9 17l5 5" stroke="#9ba2a8" strokeWidth="2.500" /></svg>
      </TaskButton>
      <TaskButton label="System information">
        <svg viewBox="0 0 22 22" className="size-[22px]"><path d="M2 1 21 0l-2 15L4 14z" fill="#d9d9df" /><path d="M4 2.500l15-1L17.500 13 6 12z" fill="#1f35b0" /><circle cx="11.500" cy="7.500" r="3.500" stroke="#dfe5ff" fill="none" /><path d="M11.500 6v4" stroke="#fff" strokeWidth="1.500" /><path d="M9 15l6 0 2 4-5 3-6-3z" fill="#c4c4cc" /></svg>
      </TaskButton>
      <TaskButton label="Text editor">
        <svg viewBox="0 0 24 24" className="size-6"><path d="M3 2h16v21H3z" fill="#f5f8ee" stroke="#555" /><path d="M3.500 13h15v9.500h-15z" fill="#8bd329" /><path d="M4 2h14" stroke="#666" strokeWidth="2" strokeDasharray="1 1" /><path d="M6 7v6M8 10h3M12 10h3" stroke="#333" strokeWidth="1.400" /><path d="M22 1 17 14l-2 5" stroke="#e98a21" strokeWidth="2.500" /></svg>
      </TaskButton>
      <TaskButton label="Chrome window" state="w-11 border-[#76b9ed] bg-[#575454]">
        <span className="relative"><ChromeIcon className="size-[22px]" /><GlassesFace className="absolute -bottom-1 -right-[5px] size-[15px]" /></span>
      </TaskButton>
      <TaskButton label="Notepad" state="w-10 border-[#76b9ed]">
        <svg viewBox="0 0 22 22" className="size-[22px]"><path d="M7 1h11l-4 18H1z" fill="#8ccbd3" /><path d="M7 1h11l-1 3H6z" fill="#d8edf0" /><path d="M18 1l3 18-6 1z" fill="#e7edf0" /><path d="M1 19h13l1 2H3z" fill="#577d86" /></svg>
      </TaskButton>
      <div className="ml-auto flex items-center">
        <span className="flex h-5 w-[49px] items-center justify-center border-2 border-white bg-[linear-gradient(to_right,#169b48_57%,#000_57%)] text-[13px] leading-none">57%</span>
        <span className="h-[9px] w-[2px] bg-white" />
        <ChevronUp className="ml-6 size-4" strokeWidth={1.6} />
        <svg viewBox="0 0 14 14" className="ml-[10px] size-[14px]"><path d="M1 9A13 13 0 0 1 13 2M3 10.500A10 10 0 0 1 13 5M5 12A7 7 0 0 1 13 8" stroke="#ddd" fill="none" /><path d="M7 13a5 5 0 0 1 6-3v3z" fill="#fff" /></svg>
        <svg viewBox="0 0 15 10" className="ml-2 h-[10px] w-[15px]"><path d="M.5.5h12v9H.5zM14 3v4" stroke="#fff" fill="none" /><path d="M2.500 2.500H7v5H2.500z" fill="#fff" /></svg>
        <svg viewBox="0 0 16 14" className="ml-2 h-[14px] w-4"><path d="M1 5h2.500L7 1.500v11L3.500 9H1z" stroke="#fff" fill="none" /><path d="M9 5q1.500 2 0 4M11 3.500q3 3.500 0 7" stroke="#ddd" fill="none" /><path d="M13 2q4 5 0 10" stroke="#888" fill="none" /></svg>
        <div className="ml-[9px] flex w-7 flex-col items-center leading-[17px]"><span>ENG</span><span>IN</span></div>
        <div className="ml-1 flex w-16 flex-col items-center leading-[17px]"><span>9:49 AM</span><span>6/25/2021</span></div>
        <svg viewBox="0 0 16 17" className="ml-3 mr-5 h-[17px] w-4"><path d="M.5.500h15v12h-4L8 15.500V12.500H.5z" stroke="#fff" fill="none" /></svg>
        <span className="mr-1 h-10 w-px bg-[#6a6868]" />
      </div>
    </footer>
  );
}

export default function App() {
  return (
    <div className="flex min-h-screen flex-col font-['Open_Sans','Noto_Sans',sans-serif]">
      <TabStrip />
      <AddressBar />
      <BookmarkBar />
      <Meeting />
      <Taskbar />
    </div>
  );
}
